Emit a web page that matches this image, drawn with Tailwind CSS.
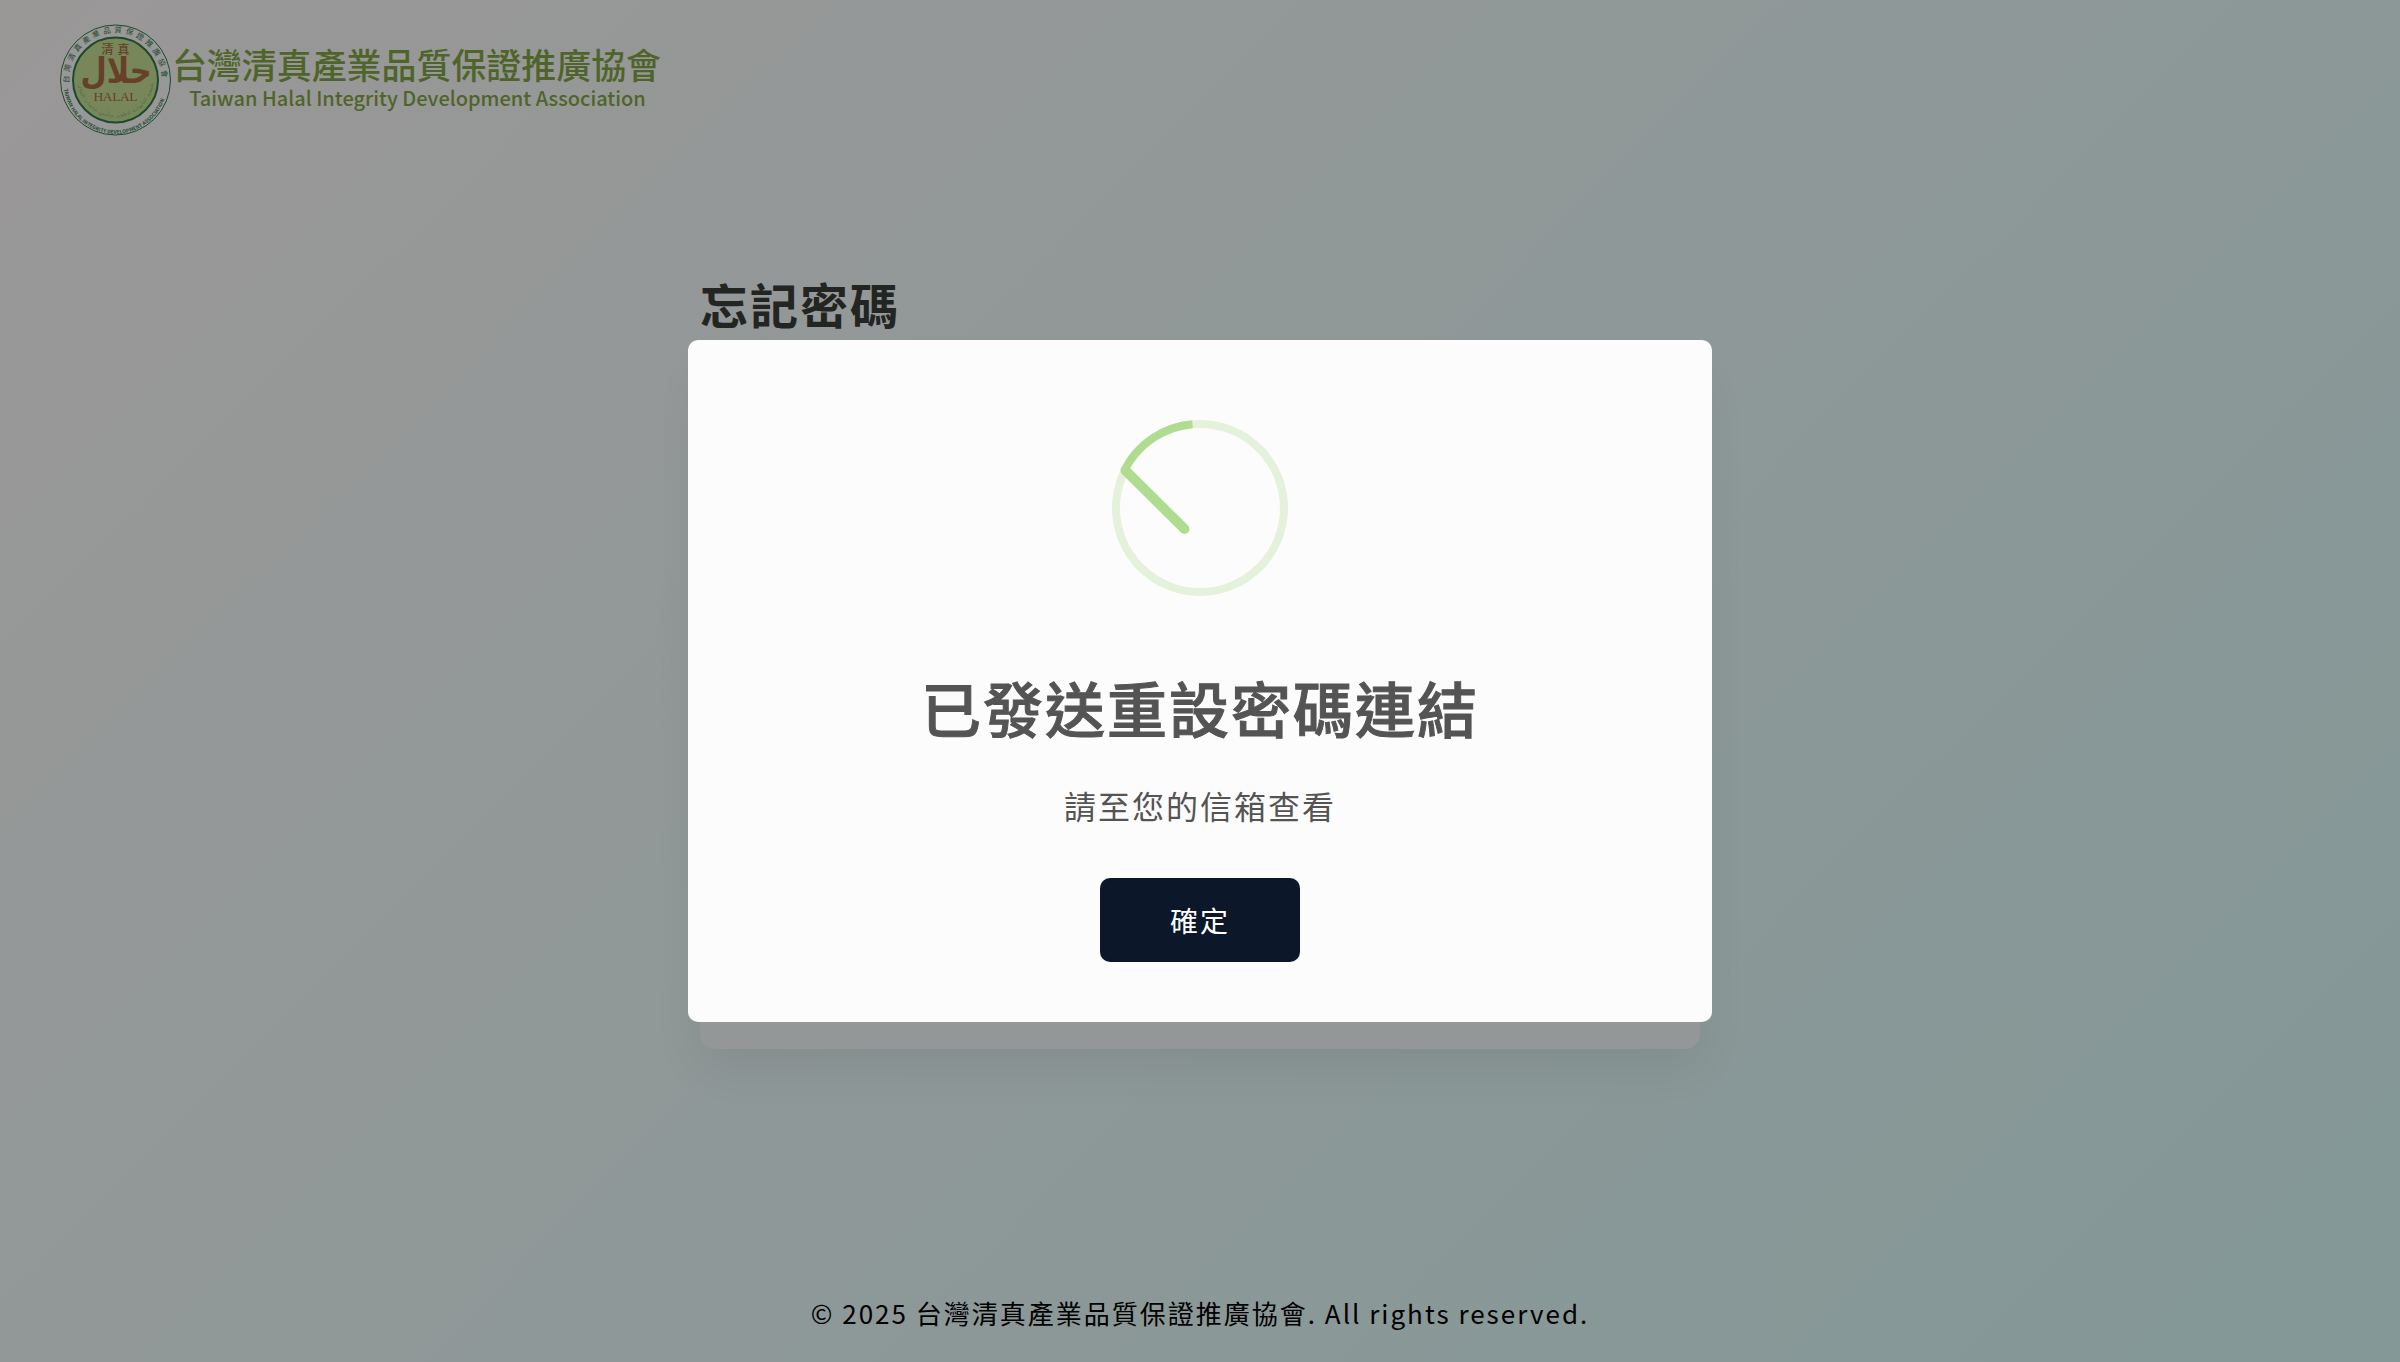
<!DOCTYPE html>
<html lang="zh-Hant">
<head>
<meta charset="utf-8">
<title>忘記密碼</title>
<script src="https://cdn.jsdelivr.net/npm/@tailwindcss/browser@4"></script>
</head>
<body class="relative h-[1362px] overflow-hidden bg-linear-[135deg,#9a9797_0%,#909898_45%,#839897_100%] font-['Noto_Sans_CJK_TC',sans-serif] tracking-[2px]">
<div class="flex h-full flex-col">
  <header class="flex h-[160px] items-start pl-[59px] pt-[23px]">
    <svg class="h-[113px] w-[113px] shrink-0" viewBox="0 0 113 113">
      <defs>
        <path id="ringTop" d="M10.500 63A46.500 46.500 0 1 1 102.500 63"/>
        <path id="ringBottom" d="M5 66A52 52 0 0 0 108 66"/>
        <path id="ringInner" d="M19 62A38 38 0 0 0 94 62"/>
      </defs>
      <circle cx="56.500" cy="57" r="55" fill="none" stroke="#1c4a2e" stroke-width="1"/>
      <circle cx="56.500" cy="57" r="42.500" fill="#77875a" stroke="#1c4a2e" stroke-width="2"/>
      <g class="tracking-normal" fill="#1c4a2e">
        <text font-size="7.500"><textPath href="#ringTop" startOffset="3" textLength="148">台灣清真產業品質保證推廣協會</textPath></text>
        <text font-size="5" font-weight="700"><textPath href="#ringBottom" textLength="138">TAIWAN HALAL INTEGRITY DEVELOPMENT ASSOCIATION</textPath></text>
        <text font-size="5" fill="#4c6b43" font-family="DejaVu Sans"><textPath href="#ringInner" textLength="112">الجمعية التايوانية لتطوير وتأمين منتجات الحلال</textPath></text>
      </g>
      <g class="tracking-normal" fill="#67402a" text-anchor="middle">
        <text x="56.500" y="31" font-size="12" font-weight="500" textLength="28">清真</text>
        <text transform="translate(57 60) scale(0.92 1.08)" font-size="33" font-weight="700" font-family="DejaVu Sans">حلال</text>
        <text x="56.500" y="78" font-size="13.500" textLength="44" font-family="Liberation Serif">HALAL</text>
      </g>
    </svg>
    <div class="flex w-[491px] flex-col items-center pt-[17px] text-[#4f6429] tracking-normal">
      <div class="-ml-[2px] text-[34.95px] font-medium leading-[48px] whitespace-nowrap">台灣清真產業品質保證推廣協會</div>
      <div class="-mt-[2px] text-[20px] font-medium leading-[24px] whitespace-nowrap">Taiwan Halal Integrity Development Association</div>
    </div>
  </header>
  <main class="mx-auto w-[1000px] pt-[107px]">
    <h1 class="text-[48px] font-bold leading-[72px] text-[#232522]">忘記密碼</h1>
    <div class="mt-[21px] h-[689px] rounded-[15px] bg-[#949797] shadow-[0_16px_48px_rgba(0,0,0,0.08)]"></div>
  </main>
  <footer class="mt-auto pb-[29px] text-center text-[26px] leading-[40px] text-black">© 2025 台灣清真產業品質保證推廣協會. All rights reserved.</footer>
</div>
<div class="absolute inset-0 flex items-center justify-center">
  <div role="dialog" class="flex h-[682px] w-[1024px] flex-col items-center rounded-[10px] bg-[#fcfcfc] pt-[80px] text-[#545454]">
    <svg class="h-[176px] w-[176px] shrink-0" viewBox="0 0 176 176" fill="none">
      <circle cx="88" cy="88" r="84" stroke="#e4f1db" stroke-width="8"/>
      <path d="M80.500 4.300A84 84 0 0 0 12.500 50" stroke="#b0dc91" stroke-width="8"/>
      <path d="M13.500 50.500L72.500 109" stroke="#b0dc91" stroke-width="10" stroke-linecap="round"/>
    </svg>
    <h2 class="mt-[66px] text-[60px] font-medium leading-[90px] [-webkit-text-stroke:1px_#545454]">已發送重設密碼連結</h2>
    <p class="mt-[29px] text-[32px] leading-[48px]">請至您的信箱查看</p>
    <button class="mt-[49px] h-[84px] w-[200px] shrink-0 rounded-[10px] bg-[#0c1829] text-[28px] tracking-[2px] text-white">確定</button>
  </div>
</div>
</body>
</html>
